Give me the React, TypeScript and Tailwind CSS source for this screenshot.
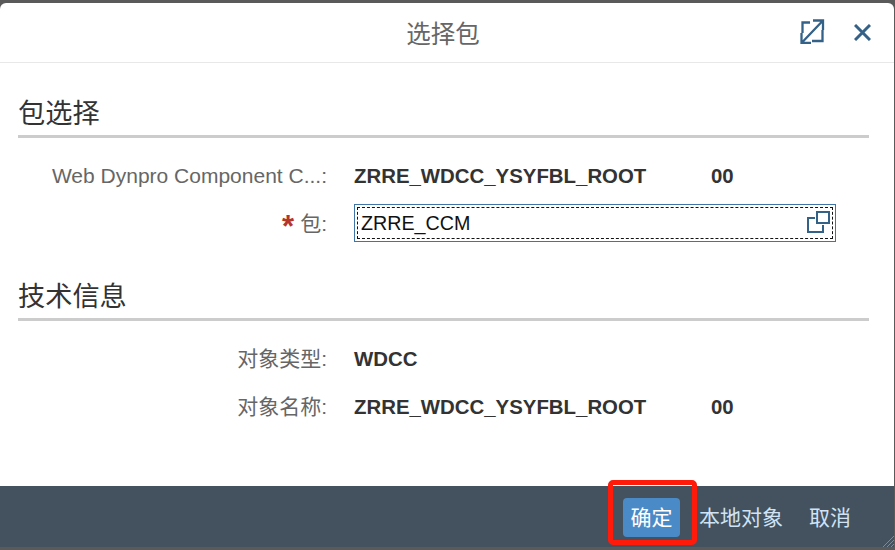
import React from "react";

const font = "font-['Liberation_Sans','Noto_Sans_CJK_SC',sans-serif]";

function Row({ label, children, star }: { label: string; children: React.ReactNode; star?: boolean }) {
  return (
    <div className="flex items-center h-[48px]">
      <div className="w-[327px] text-right text-[21px] text-[#666666] shrink-0 whitespace-nowrap flex justify-end items-center">
        {star && <span className="text-[#b5352a] text-[31px] font-bold leading-none mr-[6px] mt-[5px]">*</span>}
        {label}
      </div>
      <div className="ml-[27px] flex-1 flex items-center min-w-0">{children}</div>
    </div>
  );
}

function Value({ a, b }: { a: string; b?: string }) {
  return (
    <div className="flex text-[20.4px] font-bold text-[#333333] whitespace-nowrap">
      <span className="w-[357px]">{a}</span>
      {b && <span>{b}</span>}
    </div>
  );
}

function Section({ title }: { title: string }) {
  return (
    <div className="ml-[18px] mr-[25px] border-b-[3px] border-[#cccccc] h-[43px] text-[27.2px] leading-[38px] text-[#333333]">{title}</div>
  );
}

export default function App() {
  return (
    <div className={`${font} w-[895px] h-[550px] bg-[#5a5a5a] pt-[3px] pr-px overflow-hidden`}>
      <div className="w-full h-[544px] bg-white rounded-t-[6px] flex flex-col overflow-hidden">
        <div className="h-[60px] shrink-0 border-b-[1px] border-b-[#e8e8e8] flex items-center justify-center relative">
          <span className="text-[24.5px] text-[#666666] mr-[8px] mt-[5px]">选择包</span>
          <div className="absolute left-[800px] top-[16px] text-[#346187]">
            <svg width="25" height="25" viewBox="0 0 25 25" fill="none" stroke="currentColor" strokeWidth="2.300">
              <path d="M10 3.500H2.500V14M1.500 14V24H11M13 1.500H23V11M22.500 11V22H12M23 1.500L1.500 24" />
            </svg>
          </div>
          <div className="absolute left-[854px] top-[21px] text-[#346187]">
            <svg width="17" height="17" viewBox="0 0 17 17" fill="none" stroke="currentColor" strokeWidth="3">
              <path d="M1 1l15 15M16 1L1 16" />
            </svg>
          </div>
        </div>
        <div className="flex-1 flex flex-col pt-[32px]">
          <Section title="包选择" />
          <div className="mt-[14px]">
            <Row label="Web Dynpro Component C...:"><Value a="ZRRE_WDCC_YSYFBL_ROOT" b="00" /></Row>
            <Row label="包:" star>
              <div className="w-[482px] h-[38px] border border-[#3f75a6] p-[2px] -mt-[2px]">
                <div className="w-full h-full border border-dashed border-[#111111] flex items-center justify-between pl-[3px] pr-[2px] text-[19.7px] text-[#111111]">
                  <span className="mt-[2px]">ZRRE_CCM</span>
                  <svg width="23" height="22" viewBox="0 0 23 22" fill="none" stroke="#346187" strokeWidth="2" className="mt-[-3px]">
                    <path d="M8 7H1v14h15v-7" />
                    <rect x="10" y="1" width="12" height="11" />
                  </svg>
                </div>
              </div>
            </Row>
          </div>
          <div className="mt-[30px]"><Section title="技术信息" /></div>
          <div className="mt-[14px]">
            <Row label="对象类型:"><Value a="WDCC" /></Row>
            <Row label="对象名称:"><Value a="ZRRE_WDCC_YSYFBL_ROOT" b="00" /></Row>
          </div>
        </div>
        <div className="h-[61px] shrink-0 bg-[#44515e] flex items-center justify-end relative text-[21px] text-[#cfe3f5]">
          <div className="absolute left-[608px] top-[-6px] w-[89px] h-[65px] border-[5px] border-[#ff1a0a] rounded-[5px]" />
          <div className="w-[57px] h-[39px] rounded-[4px] bg-[#4a8bc7] text-white flex items-center justify-center mr-[19px] mt-[2px]">确定</div>
          <span className="mr-[26px] mt-[2px]">本地对象</span>
          <span className="mr-[43px] mt-[2px]">取消</span>
          <svg width="12" height="12" viewBox="0 0 12 12" fill="none" stroke="#5b93c4" strokeWidth="1" className="absolute right-0 bottom-0">
            <path d="M1 12L12 1M5 12L12 5M9 12L12 9" />
          </svg>
        </div>
      </div>
    </div>
  );
}
